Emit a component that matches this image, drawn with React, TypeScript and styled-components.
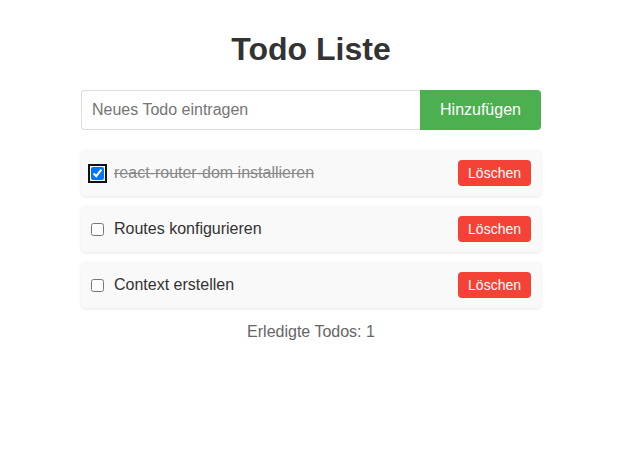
import React, { useState } from "react";
import styled, { createGlobalStyle } from "styled-components";

const GlobalStyle = createGlobalStyle`
  html, body { margin: 0; padding: 0; background: #fff; }
  body { font-family: "Liberation Sans", Arial, sans-serif; }
`;

const Page = styled.div`
  display: flex;
  justify-content: center;
  padding: 31px 11px 0 0;
`;

const Container = styled.div`
  width: 460px;
  display: flex;
  flex-direction: column;
`;

const Title = styled.h1`
  margin: 0 0 22px;
  font-size: 32px;
  font-weight: bold;
  color: #333;
  text-align: center;
`;

const InputRow = styled.form`
  display: flex;
  margin: 0 0 20px;
`;

const TextInput = styled.input`
  flex: 1;
  min-width: 0;
  height: 40px;
  box-sizing: border-box;
  padding: 10px;
  font-family: inherit;
  font-size: 16px;
  color: #333;
  border: 1px solid #ddd;
  border-right: none;
  border-radius: 4px 0 0 4px;
  outline: none;
  &::placeholder { color: #757575; }
`;

const AddButton = styled.button`
  width: 121px;
  height: 40px;
  border: none;
  border-radius: 0 4px 4px 0;
  background: #4caf50;
  color: #fff;
  font-family: inherit;
  font-size: 16px;
  cursor: pointer;
`;

const List = styled.ul`
  list-style: none;
  margin: 0;
  padding: 0;
  display: flex;
  flex-direction: column;
  gap: 10px;
`;

const Item = styled.li`
  display: flex;
  align-items: center;
  padding: 10px;
  background: #f9f9f9;
  border-radius: 4px;
  box-shadow: 0 1px 3px rgba(0, 0, 0, 0.1);
`;

const Check = styled.input<{ $focused?: boolean }>`
  width: 13px;
  height: 13px;
  margin: 0 10px 0 0;
  ${(p) => (p.$focused ? "outline: 2px solid #101010; outline-offset: 1px;" : "")}
`;

const Label = styled.span<{ $done: boolean }>`
  flex: 1;
  font-size: 16px;
  color: ${(p) => (p.$done ? "#888" : "#333")};
  text-decoration: ${(p) => (p.$done ? "line-through" : "none")};
`;

const DeleteButton = styled.button`
  height: 26px;
  padding: 0 10px;
  border: none;
  border-radius: 4px;
  background: #f44336;
  color: #fff;
  font-family: inherit;
  font-size: 14px;
  cursor: pointer;
`;

const Footer = styled.p`
  margin: 15px 0 0;
  font-size: 16px;
  color: #666;
  text-align: center;
`;

type Todo = { id: number; text: string; done: boolean };

export default function App() {
  const [todos, setTodos] = useState<Todo[]>([
    { id: 1, text: "react-router-dom installieren", done: true },
    { id: 2, text: "Routes konfigurieren", done: false },
    { id: 3, text: "Context erstellen", done: false },
  ]);
  const [text, setText] = useState("");

  const add = (e: React.FormEvent) => {
    e.preventDefault();
    if (!text.trim()) return;
    setTodos([...todos, { id: Date.now(), text, done: false }]);
    setText("");
  };

  return (
    <>
      <GlobalStyle />
      <Page>
        <Container>
          <Title>Todo Liste</Title>
          <InputRow onSubmit={add}>
            <TextInput
              placeholder="Neues Todo eintragen"
              value={text}
              onChange={(e) => setText(e.target.value)}
            />
            <AddButton type="submit">Hinzufügen</AddButton>
          </InputRow>
          <List>
            {todos.map((t) => (
              <Item key={t.id}>
                <Check
                  type="checkbox"
                  checked={t.done}
                  $focused={t.id === 1}
                  onChange={() =>
                    setTodos(todos.map((x) => (x.id === t.id ? { ...x, done: !x.done } : x)))
                  }
                />
                <Label $done={t.done}>{t.text}</Label>
                <DeleteButton onClick={() => setTodos(todos.filter((x) => x.id !== t.id))}>
                  Löschen
                </DeleteButton>
              </Item>
            ))}
          </List>
          <Footer>Erledigte Todos: {todos.filter((t) => t.done).length}</Footer>
        </Container>
      </Page>
    </>
  );
}
